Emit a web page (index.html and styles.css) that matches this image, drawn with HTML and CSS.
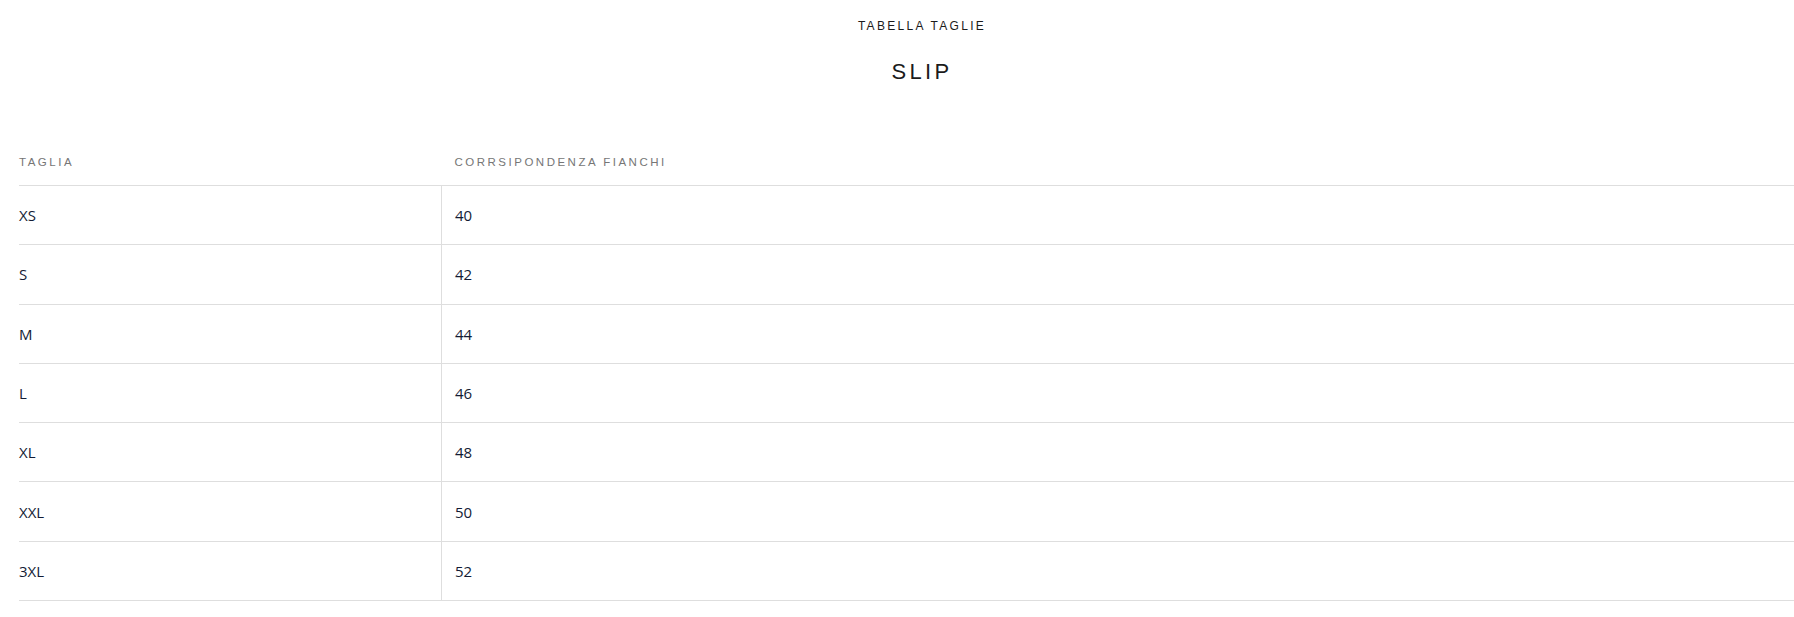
FILE: index.html
```html
<!DOCTYPE html>
<html lang="it">
<head>
<meta charset="utf-8">
<title>Tabella taglie</title>
<link rel="stylesheet" href="styles.css">
</head>
<body>
<div class="page">
  <div class="kicker">TABELLA TAGLIE</div>
  <h1 class="title">SLIP</h1>
  <table class="sizes">
    <thead>
      <tr><th class="c1">TAGLIA</th><th>CORRSIPONDENZA FIANCHI</th></tr>
    </thead>
    <tbody>
      <tr><td class="c1">XS</td><td>40</td></tr>
      <tr><td class="c1">S</td><td>42</td></tr>
      <tr><td class="c1">M</td><td>44</td></tr>
      <tr><td class="c1">L</td><td>46</td></tr>
      <tr><td class="c1">XL</td><td>48</td></tr>
      <tr><td class="c1">XXL</td><td>50</td></tr>
      <tr><td class="c1">3XL</td><td>52</td></tr>
    </tbody>
  </table>
</div>
</body>
</html>
```

FILE: styles.css
```css
html, body { margin: 0; padding: 0; background: #fff; }
body { overflow: hidden; }
.page { width: 1806px; padding: 19px 0 0 19px; }
.kicker {
  text-align: center;
  font-family: "Liberation Sans", Arial, sans-serif;
  font-size: 12px;
  letter-spacing: 2.3px;
  color: #1b1b1b;
  line-height: 14px;
}
.title {
  margin: 26px 0 0 0;
  text-align: center;
  font-family: "Liberation Sans", Arial, sans-serif;
  font-weight: normal;
  font-size: 22px;
  letter-spacing: 3.3px;
  color: #1b1b1b;
  line-height: 26px;
}
.sizes {
  margin-top: 70px;
  width: 1806px;
  border-collapse: collapse;
}
.sizes th {
  font-family: "Liberation Sans", Arial, sans-serif;
  font-weight: normal;
  font-size: 11.5px;
  letter-spacing: 2.5px;
  color: #767676;
  text-align: left;
  padding: 0 0 16px 13px;
  height: 14px;
  border-bottom: 1px solid #dedede;
}
.sizes th.c1 { padding-left: 0; }
.sizes td {
  font-family: "Open Sans", "Noto Sans", sans-serif;
  font-size: 15px;
  color: #131b34;
  height: 58.3px;
  padding: 0 0 0 13px;
  border-bottom: 1px solid #dedede;
  vertical-align: middle;
}
.sizes .c1 { width: 422px; padding-left: 0; }
.sizes td.c1 { border-right: 1px solid #dedede; }
```
